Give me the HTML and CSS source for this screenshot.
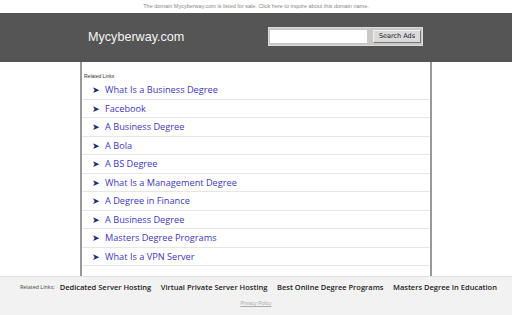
FILE: index.html
```html
<!DOCTYPE html>
<html>
<head>
<meta charset="utf-8">
<link rel="stylesheet" href="styles.css">
</head>
<body>
<div class="topbar">The domain Mycyberway.com is listed for sale. Click here to inquire about this domain name.</div>
<div class="header">
  <div class="header-inner">
    <div class="logo">Mycyberway.com</div>
    <div class="search">
      <div class="search-input"></div>
      <div class="search-btn">Search Ads</div>
    </div>
  </div>
</div>
<div class="content">
  <div class="rl-title">Related Links</div>
  <ul class="links">
    <li><span class="arrow">➤</span><span class="lt">What Is a Business Degree</span></li>
    <li><span class="arrow">➤</span><span class="lt">Facebook</span></li>
    <li><span class="arrow">➤</span><span class="lt">A Business Degree</span></li>
    <li><span class="arrow">➤</span><span class="lt">A Bola</span></li>
    <li><span class="arrow">➤</span><span class="lt">A BS Degree</span></li>
    <li><span class="arrow">➤</span><span class="lt">What Is a Management Degree</span></li>
    <li><span class="arrow">➤</span><span class="lt">A Degree in Finance</span></li>
    <li><span class="arrow">➤</span><span class="lt">A Business Degree</span></li>
    <li><span class="arrow">➤</span><span class="lt">Masters Degree Programs</span></li>
    <li><span class="arrow">➤</span><span class="lt">What Is a VPN Server</span></li>
  </ul>
</div>
<div class="footer">
  <div class="frow">
    <span class="frl">Related Links:</span>
    <span class="fl">Dedicated Server Hosting</span>
    <span class="fl">Virtual Private Server Hosting</span>
    <span class="fl">Best Online Degree Programs</span>
    <span class="fl">Masters Degree In Education</span>
  </div>
  <div class="privacy">Privacy Policy</div>
</div>
</body>
</html>
```
FILE: styles.css
```css
html, body { margin: 0; padding: 0; background: #fff; }
body { width: 512px; height: 315px; overflow: hidden; font-family: "Liberation Sans", Arial, sans-serif; }
.topbar { height: 13px; line-height: 12px; text-align: center; font-size: 5.5px; color: #888; }
.header { height: 49px; background: #555555; }
.header-inner { display: flex; align-items: center; padding-left: 88px; height: 47px; }
.logo { color: #f4f4f4; font-size: 12.6px; width: 180px; }
.search { display: flex; align-items: center; background: #c8c8c8; border: 1px solid #dcdcdc; padding: 1px 1px; height: 15px; }
.search-input { width: 97px; height: 13px; background: #fff; }
.search-btn { margin-left: 6px; width: 46px; height: 11px; background: #dadada; border: 1px solid; border-color: #f0f0f0 #777 #777 #f0f0f0; font-family: "DejaVu Sans", sans-serif; font-size: 6.5px; color: #222; text-align: center; line-height: 11px; }
.content { width: 348px; margin: 0 auto; border-left: 2px solid #999; border-right: 2px solid #999; height: 214px; padding: 0; box-sizing: content-box; }
.rl-title { font-size: 5px; color: #333; padding: 11px 0 0 2px; height: 8px; }
.links { list-style: none; margin: 0; padding: 0; }
.links li { display: flex; align-items: center; height: 17.5px; border-bottom: 1px solid #e6e6e6; font-family: "Open Sans", sans-serif; font-size: 9.2px; color: #3f38b8; }
.arrow { width: 13px; margin-left: 10px; font-size: 8.5px; color: #222a6e; }
.footer { background: #f2f2f2; border-top: 1px solid #e0e0e0; height: 40px; }
.frow { display: flex; align-items: center; padding-left: 20px; height: 20px; font-family: "Open Sans", sans-serif; white-space: nowrap; }
.frl { font-size: 5.4px; color: #444; margin-right: 5px; flex-shrink: 0; }
.fl { font-size: 7.5px; font-weight: 600; color: #222; margin-right: 9.5px; flex-shrink: 0; }
.privacy { text-align: center; font-size: 5px; color: #aaa; text-decoration: underline; padding-top: 3px; }
```
